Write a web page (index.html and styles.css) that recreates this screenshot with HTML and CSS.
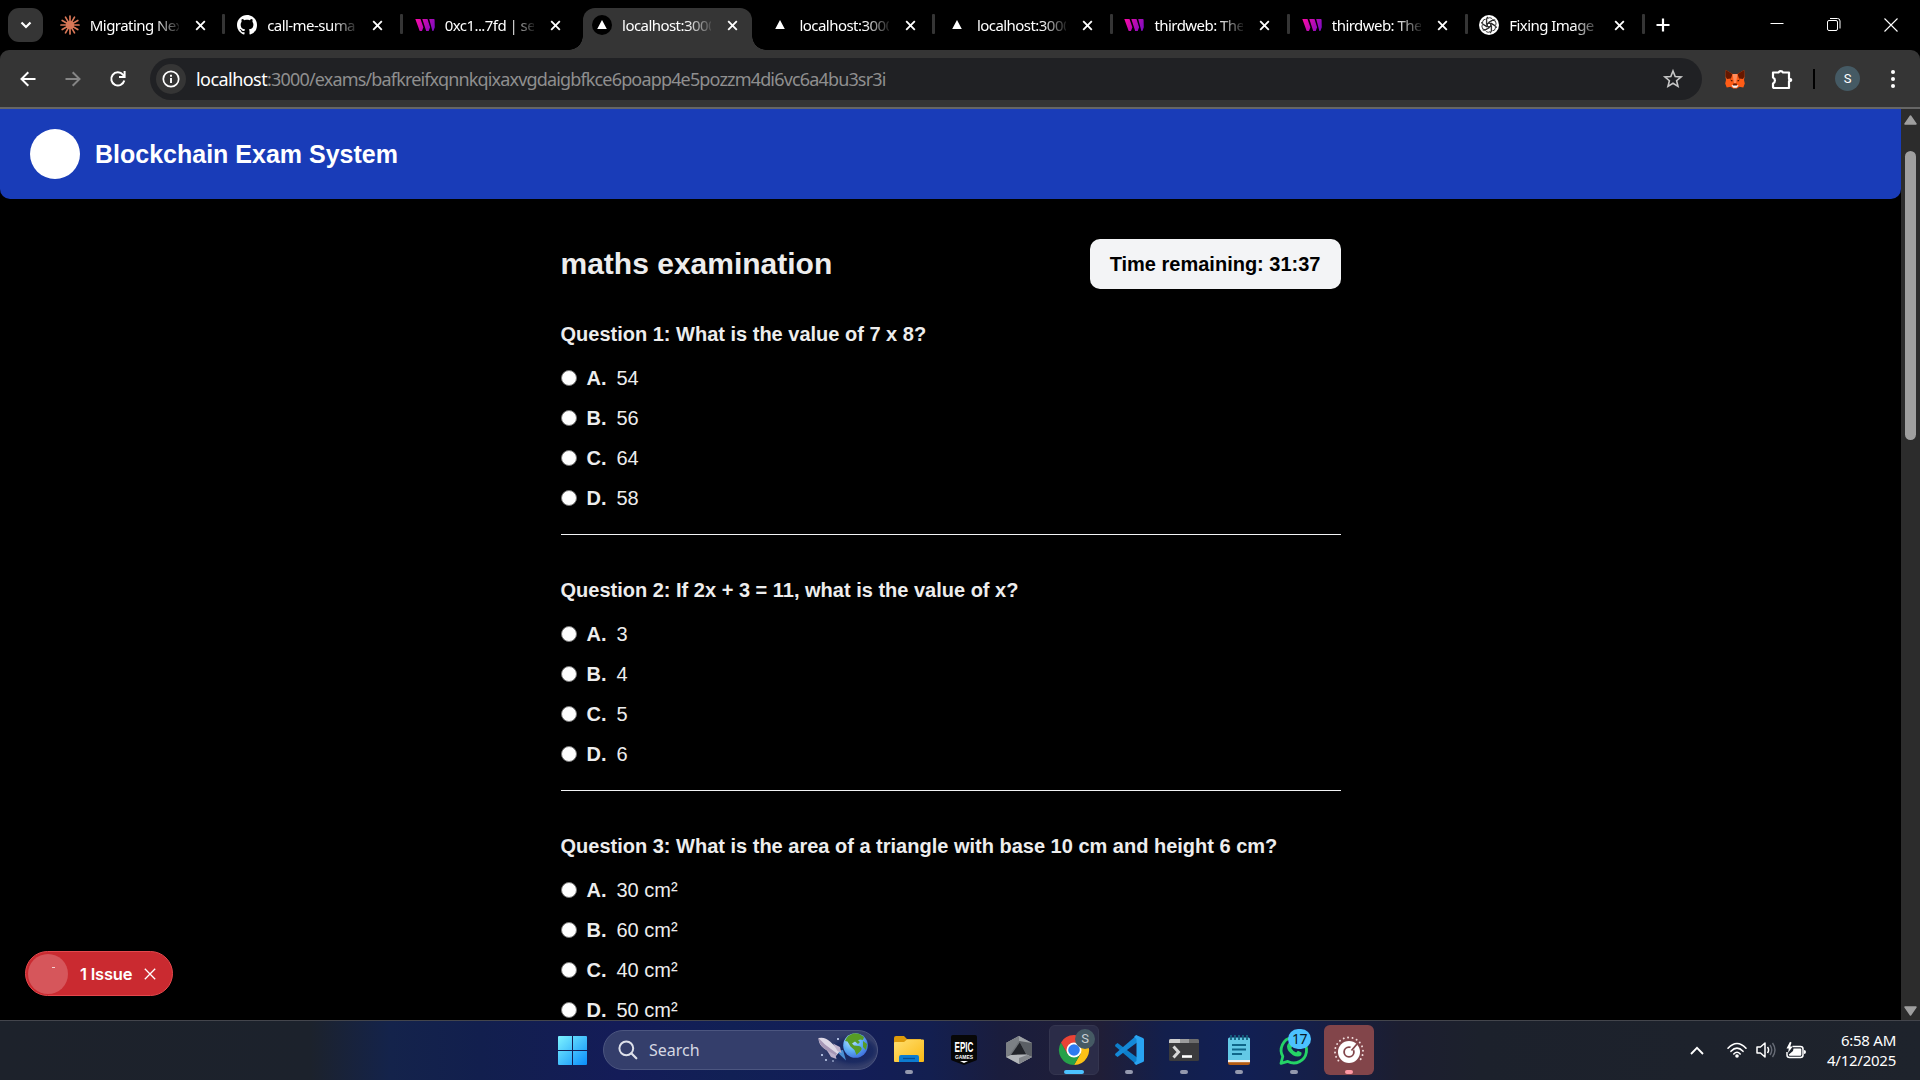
FILE: index.html
```html
<!DOCTYPE html>
<html lang="en">
<head>
<meta charset="utf-8">
<title>Blockchain Exam System</title>
<link rel="stylesheet" href="styles.css">
</head>
<body>
<svg class="defs" width="0" height="0">
  <defs>
    <linearGradient id="pink" gradientUnits="userSpaceOnUse" x1="0" y1="4" x2="20" y2="14"><stop offset="0" stop-color="#ff0aa5"/><stop offset="1" stop-color="#7a0bc0"/></linearGradient>
    <linearGradient id="win" x1="0" y1="0" x2="1" y2="1"><stop offset="0" stop-color="#7df3ff"/><stop offset="1" stop-color="#0a8dfa"/></linearGradient>
    <linearGradient id="folder" x1="0" y1="0" x2="1" y2="1"><stop offset="0" stop-color="#ffdf70"/><stop offset="1" stop-color="#fbb914"/></linearGradient>
    <radialGradient id="ocean" cx="0.35" cy="0.3" r="0.8"><stop offset="0" stop-color="#bfe3ff"/><stop offset="0.5" stop-color="#5fb0f5"/><stop offset="1" stop-color="#3a66d8"/></radialGradient>
    <radialGradient id="night" cx="0.6" cy="0.5" r="0.55"><stop offset="0" stop-color="#12205c"/><stop offset="0.6" stop-color="#16265f" stop-opacity="0.8"/><stop offset="1" stop-color="#343e6b" stop-opacity="0"/></radialGradient>
    <symbol id="x" viewBox="0 0 12 12"><path d="M1.300 1.300l9.400 9.400M10.700 1.300l-9.400 9.400" fill="none" stroke="#fff" stroke-width="2"/></symbol>
    <symbol id="tw" viewBox="0 0 20 20"><path d="M.3 4h5.200l2.900 8.300L7 16H4.700zM7.300 4h5.200l2.600 8.300-1.400 3.700h-2.500zM14.200 4h4.600q.7 0 .8.8l.2 7.500-1.400 3.700h-1z" fill="url(#pink)"/></symbol>
    <symbol id="tri" viewBox="0 0 20 20"><path d="M10 5l4.800 9H5.200z" fill="#fff"/></symbol>
  </defs>
</svg>
<div class="screen">
  <div class="tabstrip">
    <div class="tab-search"><svg width="12" height="8" viewBox="0 0 12 8"><path d="M1.500 1.500L6 6l4.500-4.500" fill="none" stroke="#fff" stroke-width="2.200"/></svg></div>
    <div class="tabs">
      <div class="tab"><svg class="fav" viewBox="-10 -10 20 20"><g stroke="#d97757" stroke-width="1.700" stroke-linecap="round"><path d="M0-9V9M-9 0H9M-4.500-7.800L4.500 7.800M4.500-7.800L-4.500 7.800M-7.800-4.500L7.800 4.500M-7.800 4.500L7.800-4.500"/></g><circle r="4" fill="#d97757"/></svg><span class="title">Migrating Nex</span><svg class="close"><use href="#x"/></svg></div>
      <div class="tab"><svg class="fav" viewBox="0 0 16 16"><path fill="#fff" d="M8 0C3.580 0 0 3.580 0 8c0 3.540 2.290 6.530 5.470 7.590.4.070.55-.17.55-.38 0-.19-.01-.82-.01-1.490-2.010.37-2.530-.49-2.690-.94-.09-.23-.48-.94-.82-1.130-.28-.15-.68-.52-.01-.53.63-.01 1.080.58 1.230.82.72 1.210 1.870.87 2.330.66.070-.52.28-.87.51-1.070-1.780-.2-3.640-.89-3.640-3.950 0-.87.31-1.590.82-2.150-.08-.2-.36-1.020.08-2.120 0 0 .67-.21 2.200.82.64-.18 1.320-.27 2-.27s1.360.09 2 .27c1.530-1.040 2.200-.82 2.200-.82.44 1.100.16 1.920.08 2.120.51.56.82 1.270.82 2.150 0 3.070-1.870 3.750-3.650 3.950.29.25.54.73.54 1.480 0 1.070-.01 1.930-.01 2.200 0 .21.15.46.55.38A8.010 8.010 0 0016 8c0-4.420-3.580-8-8-8z"/></svg><span class="title">call-me-suma</span><svg class="close"><use href="#x"/></svg></div>
      <div class="tab nosep"><svg class="fav"><use href="#tw"/></svg><span class="title">0xc1...7fd | sep</span><svg class="close"><use href="#x"/></svg></div>
      <div class="tab active nosep"><svg class="fav dark"><use href="#tri"/></svg><span class="title">localhost:3000</span><svg class="close"><use href="#x"/></svg></div>
      <div class="tab"><svg class="fav"><use href="#tri"/></svg><span class="title">localhost:3000</span><svg class="close"><use href="#x"/></svg></div>
      <div class="tab"><svg class="fav"><use href="#tri"/></svg><span class="title">localhost:3000</span><svg class="close"><use href="#x"/></svg></div>
      <div class="tab"><svg class="fav"><use href="#tw"/></svg><span class="title">thirdweb: The</span><svg class="close"><use href="#x"/></svg></div>
      <div class="tab"><svg class="fav"><use href="#tw"/></svg><span class="title">thirdweb: The</span><svg class="close"><use href="#x"/></svg></div>
      <div class="tab"><svg class="fav" viewBox="-10 -10 20 20"><circle r="10" fill="#fff"/><g fill="none" stroke="#222" stroke-width="0.900"><path id="knot" d="M-2.200-5.600a3.300 3.300 0 0 1 5.600-.2M-2.200-5.600v6.200l2.300 1.400M-.8-2.600l4-2.300a3.200 3.200 0 0 1 3.200 0"/><use href="#knot" transform="rotate(60)"/><use href="#knot" transform="rotate(120)"/><use href="#knot" transform="rotate(180)"/><use href="#knot" transform="rotate(240)"/><use href="#knot" transform="rotate(300)"/></g></svg><span class="title">Fixing Image</span><svg class="close"><use href="#x"/></svg></div>
    </div>
    <svg class="plus" width="14" height="14" viewBox="0 0 14 14"><path d="M7 .5v13M.5 7h13" stroke="#fff" stroke-width="2.200"/></svg>
    <div class="winctl">
      <svg width="14" height="14" viewBox="0 0 14 14"><path d="M.5 5.500h13" stroke="#fff"/></svg>
      <svg width="14" height="14" viewBox="0 0 14 14"><g fill="none" stroke="#fff"><rect x=".5" y="2.500" width="10" height="10" rx="1.500"/><path d="M3 .5h7.500a2.500 2.500 0 0 1 2.500 2.500V10.500"/></g></svg>
      <svg width="14" height="14" viewBox="0 0 14 14"><path d="M.5.5l13 13M13.500.5l-13 13" stroke="#fff" stroke-width="1.100"/></svg>
    </div>
  </div>

  <div class="toolbar">
    <div class="nav">
      <svg width="16" height="16" viewBox="0 0 16 16"><path d="M15.500 8H2M8.300 1.200L1.500 8l6.800 6.800" fill="none" stroke="#fff" stroke-width="2"/></svg>
      <svg width="16" height="16" viewBox="0 0 16 16"><path d="M.5 8H14M7.700 1.200L14.500 8l-6.800 6.800" fill="none" stroke="#858585" stroke-width="2"/></svg>
      <svg width="16" height="16" viewBox="0 0 16 16"><path d="M14.300 9.600A6.600 6.600 0 1 1 12.900 3.600L14.500 5.500" fill="none" stroke="#fff" stroke-width="2"/><path d="M15.600 0v7H9V5h4.600V0z" fill="#fff"/></svg>
    </div>
    <div class="omnibox">
      <div class="info"><svg width="18" height="18" viewBox="0 0 18 18"><circle cx="9" cy="9" r="7.700" fill="none" stroke="#fff" stroke-width="1.700"/><path d="M9 8v5M9 4.800v1.900" stroke="#fff" stroke-width="1.900"/></svg></div>
      <div class="url"><b>localhost</b>:3000/exams/bafkreifxqnnkqixaxvgdaigbfkce6poapp4e5pozzm4di6vc6a4bu3sr3i</div>
      <svg class="star" width="20" height="20" viewBox="0 0 20 20"><path d="M10 2l2.200 5.500 5.900.4-4.500 3.800 1.400 5.700-5-3.100-5 3.100 1.400-5.700L1.900 7.900l5.900-.4z" fill="none" stroke="#c7c7c7" stroke-width="1.600"/></svg>
    </div>
    <svg class="fox" width="20" height="20" viewBox="0 0 20 20"><path d="M.8 1L7.500 5h5L19.200 1l.3 7-.5 3 .8 3.500-1.500 4-4-.8-2.500 1.800H8.200l-2.500-1.800-4 .8-1.500-4L1 11 .5 8z" fill="#ff5c16"/><path d="M.8 1L7.500 5 6 9.500 2 10 .5 7.500zM19.200 1L12.500 5 14 9.500l4 .5 1.500-2.500z" fill="#661800"/><path d="M7.500 5L9 14h2l1.500-9z" fill="#ff8d5d"/><path d="M5 10.500l2.800 1-.8 1.300zM15 10.500l-2.800 1 .8 1.300z" fill="#3a1206"/><path d="M6.500 16.500l2-.8h3l2 .8-2 2.300h-3z" fill="#f4f4f4"/><path d="M8.300 14.500h3.400l.5 2H7.800z" fill="#661800"/></svg>
    <svg class="puzzle" width="22" height="22" viewBox="0 0 22 22"><path d="M2 4.500h5.500a2.500 2.500 0 0 1 4.500 0h6v6.200a1.400 1.400 0 0 1 0 2.600V20H3.500Q2 20 2 18.500V15.500a3.300 3.300 0 0 0 0-6z" fill="none" stroke="#fff" stroke-width="2.200" stroke-linejoin="round"/><circle cx="19.300" cy="12" r="2" fill="#fff"/></svg>
    <span class="bar"></span>
    <span class="avatar">S</span>
    <svg class="dots" width="4" height="18" viewBox="0 0 4 18"><g fill="#fff"><circle cx="2" cy="2" r="2"/><circle cx="2" cy="9" r="2"/><circle cx="2" cy="16" r="2"/></g></svg>
  </div>

  <div class="viewport">
    <div class="page">
      <header class="banner"><span class="logo"></span><h1>Blockchain Exam System</h1></header>
      <main class="exam">
        <div class="exam-head"><h2>maths examination</h2><div class="timer">Time remaining: 31:37</div></div>
        <section class="question">
          <h3>Question 1: What is the value of 7 x 8?</h3>
          <label><i></i><b>A.</b><span>54</span></label>
          <label><i></i><b>B.</b><span>56</span></label>
          <label><i></i><b>C.</b><span>64</span></label>
          <label><i></i><b>D.</b><span>58</span></label>
        </section>
        <section class="question">
          <h3>Question 2: If 2x + 3 = 11, what is the value of x?</h3>
          <label><i></i><b>A.</b><span>3</span></label>
          <label><i></i><b>B.</b><span>4</span></label>
          <label><i></i><b>C.</b><span>5</span></label>
          <label><i></i><b>D.</b><span>6</span></label>
        </section>
        <section class="question">
          <h3>Question 3: What is the area of a triangle with base 10 cm and height 6 cm?</h3>
          <label><i></i><b>A.</b><span>30 cm²</span></label>
          <label><i></i><b>B.</b><span>60 cm²</span></label>
          <label><i></i><b>C.</b><span>40 cm²</span></label>
          <label><i></i><b>D.</b><span>50 cm²</span></label>
        </section>
      </main>
      <div class="issue"><span class="mark"><em></em></span><span class="msg">1 Issue</span><svg width="12" height="12" viewBox="0 0 12 12"><path d="M.8.8l10.400 10.400M11.200.8L.8 11.200" stroke="#fff" stroke-width="1.300"/></svg></div>
    </div>
    <div class="scrollbar">
      <svg width="13" height="10" viewBox="0 0 13 10"><path d="M6.500 1L12 9H1z" fill="#9f9f9f" stroke="#9f9f9f" stroke-width="1.500" stroke-linejoin="round"/></svg>
      <span class="thumb"></span>
      <svg width="13" height="10" viewBox="0 0 13 10"><path d="M6.500 9L12 1H1z" fill="#9f9f9f" stroke="#9f9f9f" stroke-width="1.500" stroke-linejoin="round"/></svg>
    </div>
  </div>

  <div class="taskbar">
    <div class="apps">
      <div class="start"><svg width="29" height="29" viewBox="0 0 29 29"><path d="M0 1Q0 0 1 0h13v14H0zM15 0h13q1 0 1 1v13H15zM0 15h14v14H1q-1 0-1-1zM15 15h14v13q0 1-1 1H15z" fill="url(#win)"/></svg></div>
      <div class="search">
        <svg width="20" height="20" viewBox="0 0 20 20"><circle cx="8.300" cy="8.300" r="6.900" fill="none" stroke="#dde0ea" stroke-width="2"/><path d="M13.300 13.300l5 5" stroke="#dde0ea" stroke-width="2.200" stroke-linecap="round"/></svg>
        <span>Search</span>
        <svg class="art" width="54" height="36" viewBox="0 0 54 36">
          <ellipse cx="30" cy="19" rx="30" ry="17" fill="url(#night)"/>
          <path d="M19 19l10 9.500-3-10.500z" fill="#58a9ef" opacity=".8"/>
          <path d="M1.500 6Q8 4.500 13 9.500l10 9.500-4.500 5.500L6.500 16Q1.500 12 1.500 6z" fill="#ddd8e6"/><path d="M1.500 6Q2 12 6.500 16l12 8.500 1.500-3L8 12.500z" fill="#a697b6"/><path d="M16 11.500l7 3.500 1.500 6-4-2zM10 18.500l4 6.500 5.500 2-1-4z" fill="#bdb0cb"/>
          <g fill="#d6e3ff"><circle cx="5" cy="23" r="1"/><circle cx="9" cy="28" r=".9"/><circle cx="21" cy="7" r="1"/><circle cx="16" cy="29" r=".8"/></g>
          <circle cx="38.500" cy="13.500" r="12.300" fill="url(#ocean)"/><path d="M28 9q2-6 9-7.800l5 .5 5 3.300-1 3-3-.5-2 1 2 1.500-2 2-3-2.500-3 2 2 2 5 .5q4 1.500 2 4.500l-4.500 4.500-2-5-4-3.500-3-5z" fill="#579c25"/><path d="M46 9l4 3-1 6-3-3z" fill="#579c25"/>
        </svg>
      </div>
      <div class="app run"><svg width="30" height="30" viewBox="0 0 30 30"><path d="M0 3q0-2 2-2h8l3 3h14v8H0z" fill="#dd9a0a"/><path d="M0 8q0-1 1-1h9l3-2.500h16q1 0 1 1V26q0 1-1 1H1q-1 0-1-1z" fill="url(#folder)"/><path d="M5 27v-5q0-2 2-2h16q2 0 2 2v5z" fill="#0d7cd0"/><path d="M9 23.500h12" stroke="#064e94" stroke-width="1.300"/></svg></div>
      <div class="app"><svg width="28" height="32" viewBox="0 0 28 32"><path d="M1 3q0-2 2-2h22q2 0 2 2v22q0 1-1 1.500L14 31 2 26.500Q1 26 1 25z" fill="#070707"/><path d="M10 27h8l-4 2z" fill="#fff"/><text x="14" y="18" text-anchor="middle" textLength="19" lengthAdjust="spacingAndGlyphs" class="epic">EPIC</text><text x="14" y="24.500" text-anchor="middle" textLength="18" lengthAdjust="spacingAndGlyphs" class="games">GAMES</text></svg></div>
      <div class="app"><svg width="28" height="30" viewBox="0 0 28 30"><path d="M14 1l13 7v14l-13 7L1 22V8z" fill="#6e7277"/><path d="M14 1l13 7-4 2-9-4-9 4-4-2z" fill="#9da1a6"/><path d="M14 1v5L5 19l-4 3V8z" fill="#7c8085"/><path d="M15 7l6.500 12.500L6 20z" fill="#22242a"/><path d="M14 6l13 2v14l-5.500-2z" fill="#5b5f65"/><path d="M6 20l15.500-.5L27 22l-13 7L1 22z" fill="#b3b6ba"/><path d="M14 23l8-3 5 2-13 7z" fill="#83868b"/></svg></div>
      <div class="app current"><svg width="30" height="30" viewBox="0 0 30 30"><path d="M15 7.500h13A15 15 0 0 1 15 30l6.500-11.300z" fill="#fbc116"/><path d="M2 7.500A15 15 0 0 0 15 30l6.500-11.300H8.500z" fill="#26a149"/><path d="M2 7.500A15 15 0 0 1 28 7.500H15L8.500 18.800z" fill="#ea4335"/><circle cx="15" cy="15" r="7.500" fill="#fff"/><circle cx="15" cy="15" r="5.800" fill="#2d7bf0"/></svg><span class="badge user">S</span></div>
      <div class="app run"><svg width="30" height="30" viewBox="0 0 30 30"><path d="M1 10l2.500-2L23 22.500V30L1.500 11.500z" fill="#0e7fcb"/><path d="M1 20l2.500 2L23 7.500V0L1.500 18.500z" fill="#1489d8"/><path d="M22 0l7 3q1 .5 1 1.500v21q0 1-1 1.500l-7 3-2-2 2.500-2V4L20 2z" fill="#29a4f2"/></svg></div>
      <div class="app run"><svg width="30" height="24" viewBox="0 0 30 24"><rect y="1" width="30" height="22" rx="1.500" fill="#3b3b3d"/><path d="M0 5V2.500Q0 1 1.500 1H11v4z" fill="#cecece"/><path d="M11 1h9v4h-9z" fill="#9c9c9c"/><path d="M20 1h8.500Q30 1 30 2.500V5H20z" fill="#6d6d6d"/><path d="M4.500 8.500l5 5.500-5 5.500" fill="none" stroke="#d7d7d7" stroke-width="3"/><path d="M13 18.500h10" stroke="#fff" stroke-width="2.600"/></svg></div>
      <div class="app run"><svg width="22" height="30" viewBox="0 0 22 30"><path d="M0 24h22v4q0 2-2 2H2q-2 0-2-2z" fill="#b35a12"/><path d="M0 4q0-1.500 1.500-1.500h19Q22 2.500 22 4v22H0z" fill="#63c9e6"/><path d="M0 25h22v2.200H0z" fill="#f2f2f2"/><path d="M3 0v5M7 0v5M11 0v5M15 0v5M19 0v5" stroke="#15607e" stroke-width="1.800"/><path d="M4 10h14M4 14.500h14M4 19h10" stroke="#0f6689" stroke-width="1.900"/></svg></div>
      <div class="app run"><svg width="30" height="30" viewBox="0 0 30 30"><path d="M2 28.300l1.800-6.800a12.700 12.700 0 1 1 5 4.900z" fill="none" stroke="#25d366" stroke-width="2.800" stroke-linejoin="round"/><path d="M9.500 8q1.500-1.200 2.500.2l1.200 2.800q.2.800-1 2 2 3.500 5 4.600l1.700-1.800 3.600 1.700q.6 4-3.500 4-5 .2-9.500-5.500Q6.500 11 9.500 8z" fill="#25d366"/></svg><span class="badge count">17</span></div>
      <div class="app run alert"><svg width="30" height="30" viewBox="0 0 30 30"><path d="M4.400 25.600A14 14 0 1 1 25.600 25.600" fill="none" stroke="#f2dede" stroke-width="1.900" stroke-linecap="round" stroke-dasharray="0.100 4.300"/><circle cx="15" cy="17" r="11" fill="#fff"/><circle cx="15" cy="17" r="4.900" fill="none" stroke="#82454a" stroke-width="1.800"/><path d="M15 17L21.500 10" stroke="#fff" stroke-width="4"/><path d="M17.500 15.500L23 9" stroke="#82454a" stroke-width="1.800"/></svg></div>
    </div>
    <div class="tray">
      <svg width="14" height="9" viewBox="0 0 14 9"><path d="M1 8l6-6.200L13 8" fill="none" stroke="#fff" stroke-width="1.800"/></svg>
      <svg class="wifi" width="20" height="16" viewBox="0 0 20 16"><g fill="none" stroke="#fff" stroke-width="1.600" stroke-linecap="round"><path d="M1 6.200q9-9.500 18 0M4 9.300q6-6.300 12 0M6.800 12q3.200-3.400 6.400 0"/></g><circle cx="10" cy="14" r="1.800" fill="#fff"/></svg>
      <svg class="vol" width="20" height="18" viewBox="0 0 20 18"><path d="M1 6h3.500L9 2v14l-4.500-4H1z" fill="none" stroke="#fff" stroke-width="1.500" stroke-linejoin="round"/><path d="M11.500 6q2.200 3 0 6" fill="none" stroke="#fff" stroke-width="1.500"/><path d="M14 4q3.500 5 0 10M16.500 2q5 7 0 14" fill="none" stroke="#666b75" stroke-width="1.400"/></svg>
      <svg class="batt" width="20" height="17" viewBox="0 0 20 17"><path d="M6.500 4.500h8q2.500 0 2.500 2.500v6q0 2.500-2.500 2.500h-11Q1 15.500 1 13V10" fill="none" stroke="#fff" stroke-width="1.500"/><path d="M7.500 6.500h7q.8 0 .8 1v5.300q0 1-1 1H4q-1.200 0-1.200-1.200L7 9z" fill="#fff"/><path d="M18 8q2 0 2 2t-2 2zM4-.2L.5 6.500h2.300L2 11l4.700-6.500H4.300L5.500.5z" fill="#fff"/></svg>
      <div class="clock"><span>6:58 AM</span><span>4/12/2025</span></div>
    </div>
  </div>
</div>
</body>
</html>
```
FILE: styles.css
```css
* { box-sizing: border-box; }
body { margin: 0; background: #000; overflow: hidden; font-family: "Noto Sans", "Open Sans", sans-serif; }
svg { display: block; flex: none; overflow: visible; }
.defs { position: absolute; }
.screen { width: 1920px; height: 1080px; display: flex; flex-direction: column; overflow: hidden; }

/* browser tabs */
.tabstrip { height: 50px; flex: none; display: flex; align-items: center; background: #000; padding-left: 8px; }
.tab-search { width: 35px; height: 34px; border-radius: 11px; background: #353535; display: flex; align-items: center; justify-content: center; margin-right: 4px; }
.tabs { display: flex; height: 50px; }
.tab { width: 177.450px; height: 50px; position: relative; display: flex; align-items: center; padding-left: 12.750px; }
.tab::after { content: ""; position: absolute; right: -1px; top: 14px; width: 3px; height: 20px; border-radius: 1px; background: #353535; }
.tab.nosep::after { display: none; }
.fav { width: 20px; height: 20px; border-radius: 50%; }
.fav.dark { background: #000; }
.title { width: 89px; margin-left: 10px; font-size: 15px; line-height: 22px; letter-spacing: -0.550px; color: #fff; white-space: nowrap; overflow: hidden; mask-image: linear-gradient(90deg, #000 72%, transparent 104%); }
.close { width: 11px; height: 11px; margin-left: 16px; }
.tab.active::before { content: ""; position: absolute; left: 4px; top: 8px; width: 169px; height: 42px; border-radius: 12px 12px 0 0; background: #353535; }
.tab.active > * { position: relative; }
.tab.active::after { display: block; left: -10px; right: auto; top: 36px; width: 197px; height: 14px; border-radius: 0; background: radial-gradient(circle at 0 0, transparent 13.500px, #353535 14px) 0 0 / 14px 14px no-repeat, radial-gradient(circle at 100% 0, transparent 13.500px, #353535 14px) 100% 0 / 14px 14px no-repeat; }
.plus { margin-left: 12px; }
.winctl { margin-left: auto; display: flex; gap: 43px; padding-right: 22px; }

/* address row */
.toolbar { height: 59px; flex: none; display: flex; align-items: center; background: #353535; border-bottom: 2px solid #666; border-radius: 9px 9px 0 0; padding-left: 20px; }
.nav { display: flex; gap: 29px; width: 130px; }
.omnibox { width: 1552px; height: 42px; border-radius: 21px; background: #202124; display: flex; align-items: center; padding: 0 19px 0 6px; }
.info { width: 30px; height: 30px; border-radius: 50%; background: #353535; display: flex; align-items: center; justify-content: center; }
.url { margin-left: 10px; font-size: 18px; letter-spacing: -0.840px; color: #8f8f8f; white-space: nowrap; }
.url b { font-weight: 400; color: #fff; letter-spacing: -0.550px; }
.star { margin-left: auto; }
.fox { margin-left: 23px; }
.puzzle { margin-left: 26px; }
.bar { width: 2px; height: 20px; background: #000; margin-left: 20px; }
.avatar { width: 25px; height: 25px; border-radius: 50%; background: #455a64; color: #fff; font: 13px/25px Roboto, sans-serif; text-align: center; margin-left: 20px; }
.dots { margin-left: 31px; }

/* page */
.viewport { height: 911px; flex: none; display: flex; }
.page { width: 1901px; position: relative; overflow: hidden; font-family: "Liberation Sans", Arial, sans-serif; color: #ededed; }
.banner { height: 90px; background: #193cb8; border-radius: 0 0 10px 10px; display: flex; align-items: center; gap: 15px; padding: 0 30px; }
.logo { width: 50px; height: 50px; border-radius: 50%; background: #fff; }
h1, h2, h3 { margin: 0; }
.banner h1 { font-size: 25px; line-height: 35px; color: #fff; }
.exam { width: 780px; margin: 40px auto 0; font-size: 20px; line-height: 30px; }
.exam-head { display: flex; justify-content: space-between; align-items: center; margin-bottom: 30px; }
.exam-head h2 { font-size: 30px; line-height: 40px; }
.timer { background: #f3f4f6; color: #000; font-weight: 700; padding: 10px 20px; border-radius: 10px; }
.question { border-bottom: 1px solid #f3f4f6; padding-bottom: 21px; margin-bottom: 40px; }
.question h3 { font-size: 20px; line-height: 30px; margin-bottom: 14px; }
.question label { display: flex; align-items: center; gap: 10px; height: 30px; margin-bottom: 10px; }
.question label:last-child { margin-bottom: 0; }
.question i { width: 16px; height: 16px; border-radius: 50%; background: #fff; border: 1px solid #767676; }
.issue { position: absolute; left: 25px; top: 842px; width: 148px; height: 45px; border-radius: 23px; background: #ca2a30; border: 1px solid #e5484d; display: flex; align-items: center; padding: 0 16px 0 2px; color: #fff; font: 600 16.500px Inter, sans-serif; letter-spacing: -0.200px; }
.issue .mark { width: 40px; height: 40px; border-radius: 50%; background: #d6565b; margin-right: 12px; }
.issue em { display: block; width: 3px; height: 1px; background: #f4d0d2; margin: 13px 0 0 24px; }
.issue svg { margin-left: auto; }
.scrollbar { width: 19px; background: #2c2c2c; display: flex; flex-direction: column; align-items: center; padding: 6px 0 4px; }
.thumb { width: 11px; height: 289px; border-radius: 6px; background: #9f9f9f; margin: 26px 0 auto; }

/* taskbar */
.taskbar { height: 60px; flex: none; display: flex; align-items: center; padding: 0 0 1px 547px; border-top: 1px solid #43454c; background: linear-gradient(90deg, #1d222b 0, #1c222c 310px, #14234b 390px, #121f4e 480px, #141c58 620px, #112055 730px, #131d58 850px, #131f50 930px, #1a1d3d 1000px, #201e37 1100px, #131f4c 1165px, #111f54 1240px, #151f49 1310px, #1c1e30 1400px, #1c212c 1480px, #1e232c 1920px); }
.apps { display: flex; align-items: center; gap: 5px; }
.start { width: 51px; padding-left: 11px; }
.search { width: 275px; height: 40px; border-radius: 20px; background: #343e6b; border: 1px solid #4c5680; display: flex; align-items: center; padding-left: 14px; margin-right: 1px; color: #d5d8e3; font-size: 16px; }
.search span { margin-left: 11px; }
.art { margin-left: auto; margin-right: 6px; }
.app { width: 50px; height: 50px; border-radius: 6px; display: flex; align-items: center; justify-content: center; position: relative; }
.app.run::after, .app.current::after { content: ""; position: absolute; bottom: 1px; left: 21px; width: 8px; height: 4px; border-radius: 2px; background: #9499ae; }
.app.current { background: #2b2c48; border: 1px solid #34354f; }
.app.current::after { left: 14px; bottom: 0; width: 20px; background: #4cc2ff; }
.app.alert { background: #82454a; }
.app.alert::after { background: #ff99a4; }
.badge { position: absolute; border-radius: 50%; text-align: center; }
.badge.user { left: 25px; top: 3px; width: 20px; height: 20px; background: #455a64; color: #c8ced2; font: 13px/20px Roboto, sans-serif; }
.badge.count { left: 19px; top: 4px; width: 23px; height: 20px; border-radius: 10px; background: #4cc2ff; color: #0b1a26; font: 14px/20px "Noto Sans", sans-serif; letter-spacing: -0.500px; }
.epic { font: 700 14px "Liberation Sans", sans-serif; fill: #fff; }
.games { font: 700 5.500px "Liberation Sans", sans-serif; fill: #fff; }
.tray { margin-left: auto; display: flex; align-items: center; padding-right: 24px; }
.wifi { margin-left: 23px; }
.vol { margin-left: 9px; }
.batt { margin-left: 10px; }
.clock { width: 76px; margin-left: 14px; padding-bottom: 1px; display: flex; flex-direction: column; align-items: flex-end; color: #fff; font-size: 15px; line-height: 20px; letter-spacing: -0.250px; white-space: nowrap; }
```
